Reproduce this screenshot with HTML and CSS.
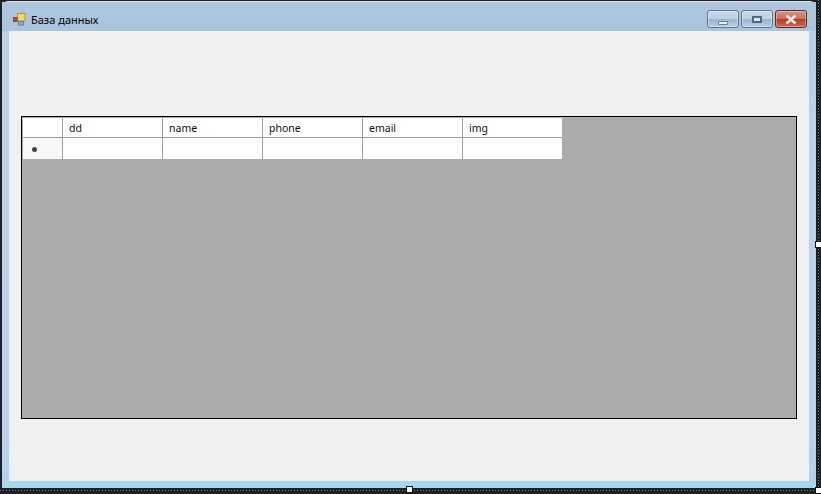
FILE: index.html
```html
<!DOCTYPE html>
<html lang="ru">
<head>
<meta charset="utf-8">
<title>База данных</title>
<link rel="stylesheet" href="styles.css">
</head>
<body>
<div class="window">
  <div class="titlebar">
    <svg class="app-icon" width="14" height="14" viewBox="0 0 14 14">
      <rect x="4.5" y="0.5" width="7.5" height="7.5" fill="#f6d860" stroke="#b8902c"/>
      <rect x="0.5" y="4.5" width="3.5" height="4" fill="#c8403c" stroke="#8e4a4a"/>
      <rect x="5.5" y="8.5" width="5" height="3.5" fill="#88a8dc" stroke="#6680b0"/>
    </svg>
    <span class="title">База данных</span>
    <div class="controls">
      <div class="btn btn-min"><span class="glyph-min"></span></div>
      <div class="btn btn-max"><span class="glyph-max"></span></div>
      <div class="btn btn-close">
        <svg width="12" height="9" viewBox="0 0 12 9"><path d="M1.5 .5 L10.5 8.5 M10.5 .5 L1.5 8.5" stroke="#f4ecea" stroke-width="2.6"/></svg>
      </div>
    </div>
  </div>
  <div class="client">
    <div class="grid">
      <div class="table">
        <div class="cell corner"></div>
        <div class="cell head">dd</div>
        <div class="cell head">name</div>
        <div class="cell head">phone</div>
        <div class="cell head">email</div>
        <div class="cell head">img</div>
        <div class="cell rowhead"><span class="dot"></span></div>
        <div class="cell body"></div>
        <div class="cell body"></div>
        <div class="cell body"></div>
        <div class="cell body"></div>
        <div class="cell body"></div>
      </div>
    </div>
  </div>
</div>
<div class="dash dash-bottom"></div>
<div class="dash dash-right"></div>
<div class="handle handle-e"></div>
<div class="handle handle-s"></div>
<div class="handle handle-se"></div>
</body>
</html>
```

FILE: styles.css
```css
html, body {
  margin: 0;
  padding: 0;
  width: 821px;
  height: 494px;
  overflow: hidden;
  background: #1d2126;
  font-family: "Noto Sans", "Open Sans", sans-serif;
  color: #111;
}
.window {
  box-sizing: border-box;
  width: 814px;
  height: 487px;
  margin: 1px 0 0 2px;
  padding: 0 7px 7px 7px;
  display: flex;
  flex-direction: column;
  border-radius: 6px 6px 0 0;
  background: linear-gradient(180deg, #b9d1e8 0, #b9d1ea 440px, #b4d2ea 470px, #a4d8ec 100%);
  border-top: 1px solid #dfe8f2;
}
.titlebar {
  box-sizing: border-box;
  height: 29px;
  display: flex;
  align-items: center;
  background: linear-gradient(180deg, #b0c6df 0, #a9c4de 100%);
  margin: 0 -7px;
  padding: 7px 9px 0 11px;
}
.app-icon { flex: none; margin-right: 4px; margin-top: -1px; }
.title { font-size: 11px; line-height: 16px; color: #000; }
.controls { margin-left: auto; display: flex; gap: 2px; align-self: flex-start; margin-top: 1px; }
.btn {
  box-sizing: border-box;
  width: 32px;
  height: 18px;
  border: 1px solid #5d7894;
  border-radius: 3px;
  display: flex;
  align-items: center;
  justify-content: center;
  background: linear-gradient(180deg, #c8d9ea 0, #bcd0e4 50%, #9ab6d0 52%, #b4cbe2 100%);
  box-shadow: inset 0 0 0 1px rgba(255,255,255,.35);
}
.btn-close {
  border-color: #5e2a22;
  background: linear-gradient(180deg, #d69484 0, #c9705c 48%, #b63a22 52%, #cc6a50 100%);
}
.glyph-min {
  box-sizing: border-box;
  width: 10px;
  height: 4px;
  margin-top: 7px;
  background: #eef2f6;
  border: 1px solid #6c7c8e;
  border-radius: 1px;
}
.glyph-max {
  box-sizing: border-box;
  width: 10px;
  height: 7px;
  background: #dfe8f0;
  border: 2px solid #56677a;
}
.client {
  flex: 1;
  background: #f0f0f0;
  padding: 85px 12px 62px 12px;
  box-shadow: inset 3px 0 0 #e9eef8;
  display: flex;
}
.grid {
  flex: 1;
  box-sizing: border-box;
  background: #ababab;
  border: 1px solid #000;
  padding: 1px 0 0 1px;
}
.table {
  display: grid;
  grid-template-columns: 40px repeat(4, 100px) 99px;
  grid-template-rows: 20px 21px;
  width: 539px;
  background: #fff;
}
.cell {
  box-sizing: border-box;
  background: #fff;
  font-size: 10.5px;
  line-height: 20px;
  padding-left: 6px;
  border-right: 1px solid #a0a0a0;
  border-bottom: 1px solid #a0a0a0;
}
.head:nth-child(6), .body:last-child { border-right: 0; }
.rowhead {
  background: #f7f7f7;
  border-bottom: 0;
  display: flex;
  align-items: center;
}
.body { border-bottom: 0; }
.dot {
  width: 5px;
  height: 5px;
  margin: 2px 0 0 3px;
  background: #444;
  border-radius: 50%;
}
.dash { position: absolute; }
.dash-bottom {
  left: 0;
  top: 490px;
  width: 815px;
  height: 1px;
  background: repeating-linear-gradient(90deg, #7a7a7a 0 1px, transparent 1px 3px);
}
.dash-right {
  left: 818px;
  top: 0;
  width: 1px;
  height: 487px;
  background: repeating-linear-gradient(180deg, #7a7a7a 0 1px, transparent 1px 3px);
}
.handle {
  position: absolute;
  width: 7px;
  height: 7px;
  background: #fff;
  box-sizing: border-box;
  border: 1px solid #111;
}
.handle-e { left: 815px; top: 241px; }
.handle-s { left: 406px; top: 486px; }
.handle-se { left: 815px; top: 487px; }
```
